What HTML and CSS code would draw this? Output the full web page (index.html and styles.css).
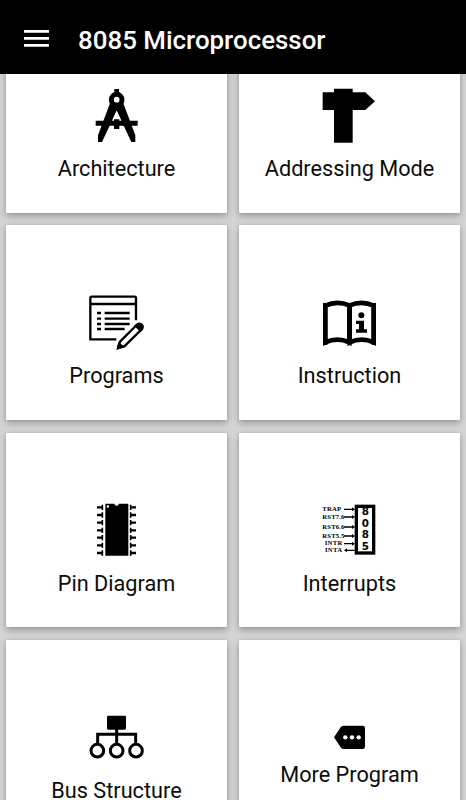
FILE: index.html
```html
<!DOCTYPE html>
<html lang="en">
<head>
    <meta charset="UTF-8">
    <meta name="viewport" content="width=device-width, initial-scale=1.0">
    <title>8085 Microprocessor</title>
    <link rel="stylesheet" href="styles.css">
</head>
<body>

    <header class="toolbar">
        <svg class="menu-icon" viewBox="0 0 25 18">
            <path d="M0 0h25v2.7H0zM0 7h25v2.7H0zM0 14h25v2.7H0z"/>
        </svg>
        <h1>8085 Microprocessor</h1>
    </header>

    <main class="content">
        <div class="grid">
            <a class="card">
                <svg class="icon" viewBox="24 24 168 168">
                    <path d="M103 27h14v14h-14zM47 122h126v15H47zM102 114h16v33h-16z"/>
                    <circle cx="110" cy="59" r="16" fill="none" stroke="#000" stroke-width="15"/>
                    <path d="M90 70L54 166V186H66L110 92L154 186H166V166L130 70L110 80z"/>
                    <path d="M98 118L110 92L122 118z" fill="#fff"/>
                </svg>
                <span class="label">Architecture</span>
            </a>
            <a class="card">
                <svg class="icon" viewBox="36 24 168 168">
                    <path d="M72 26h56v11h38l29 27-29 26h-38v98H72V90H38V37h34z"/>
                </svg>
                <span class="label">Addressing Mode</span>
            </a>
            <a class="card">
                <svg class="icon" viewBox="24 30 168 168">
                    <path d="M109 163H31V39q0-4 4-4H164q4 0 4 4V106M31 57H168" fill="none" stroke="#000" stroke-width="7"/>
                    <path d="M51 84h12M51 101h12M51 117h12M51 132h12M74 84h75M74 101h75M74 117h75M74 132h60" stroke="#000" stroke-width="7"/>
                    <path d="M114 189L120 170L170 120Q177 113 184 120Q190 127 184 134L133 184Z" fill="#fff" stroke="#000" stroke-width="7" stroke-linejoin="round"/>
                    <path d="M109 195L115 171L134 185zM162 122L172 115Q184 110 190 119Q193 127 188 135L181 141z"/>
                </svg>
                <span class="label">Programs</span>
            </a>
            <a class="card">
                <svg class="icon" viewBox="36 29 168 168">
                    <path d="M46 61Q81 45 118 60V171Q82 155 46 171zM119 60Q156 45 191 61V171Q155 155 119 171z" fill="none" stroke="#000" stroke-width="14"/>
                    <path d="M39 53h13v126H39zM185 53h13v126h-13zM112 168h14l-7 12z"/>
                    <circle cx="154" cy="90" r="9"/>
                    <path d="M138 106h24v26h9v10h-33v-10h9v-16h-9z"/>
                </svg>
                <span class="label">Instruction</span>
            </a>
            <a class="card">
                <svg class="icon" viewBox="24 31 168 168">
                    <path d="M76 36h27q1 6 7 6t7-6h28v156H76z"/>
                    <rect x="80" y="41" width="7" height="7" rx="3" fill="#fff"/>
                    <path d="M51 47h15M51 70h15M51 93h15M51 116h15M51 138h15M51 161h15M51 184h15M153 47h15M153 70h15M153 93h15M153 116h15M153 138h15M153 161h15M153 184h15" stroke="#000" stroke-width="7"/>
                    <path d="M67 39v16M67 62v16M67 85v16M67 108v16M67 130v16M67 153v16M67 176v16M152 39v16M152 62v16M152 85v16M152 108v16M152 130v16M152 153v16M152 176v16" stroke="#000" stroke-width="5"/>
                </svg>
                <span class="label">Pin Diagram</span>
            </a>
            <a class="card">
                <svg class="icon" viewBox="36 31 168 168">
                    <rect x="139" y="44" width="52" height="140" fill="none" stroke="#000" stroke-width="10"/>
                    <g class="pin-names">
                        <text x="37" y="57" textLength="56">TRAP</text>
                        <text x="37" y="82" textLength="66">RST7.6</text>
                        <text x="37" y="111" textLength="66">RST6.6</text>
                        <text x="37" y="138" textLength="66">RST5.5</text>
                        <text x="44" y="161" textLength="53">INTR</text>
                        <text x="45" y="182" textLength="51">INTA</text>
                    </g>
                    <path d="M102 53h25M102 76h25M102 106h25M102 133h25M102 156h25M108 176h26" stroke="#000" stroke-width="4"/>
                    <path d="M126 47l9 6-9 6zM126 70l9 6-9 6zM126 100l9 6-9 6zM126 127l9 6-9 6zM126 150l9 6-9 6zM111 170l-9 6 9 6z"/>
                    <g class="chip-digits">
                        <text x="166" y="71">8</text>
                        <text x="166" y="106">0</text>
                        <text x="166" y="140">8</text>
                        <text x="166" y="174">5</text>
                    </g>
                </svg>
                <span class="label">Interrupts</span>
            </a>
            <a class="card">
                <svg class="icon" viewBox="24 28 168 168">
                    <rect x="81" y="48" width="57" height="42" rx="4"/>
                    <path d="M110 88v46M53 134v-30H167v30" fill="none" stroke="#000" stroke-width="9"/>
                    <g fill="none" stroke="#000" stroke-width="9">
                        <circle cx="52" cy="153" r="19"/>
                        <circle cx="110" cy="153" r="19"/>
                        <circle cx="168" cy="153" r="19"/>
                    </g>
                </svg>
                <span class="label">Bus Structure</span>
            </a>
            <a class="card card-more">
                <svg class="icon" viewBox="66 33 108 96">
                    <path d="M100 47h58q7 0 7 7v56q0 7-7 7h-58q-5 0-8-5L72 82l20-30q3-5 8-5z"/>
                    <g fill="#fff">
                        <circle cx="106" cy="82" r="6.5"/>
                        <circle cx="126" cy="82" r="6.5"/>
                        <circle cx="146" cy="82" r="6.5"/>
                    </g>
                </svg>
                <span class="label">More Program</span>
            </a>
        </div>
    </main>

</body>
</html>
```

FILE: styles.css
```css
body {
    margin: 0;
    height: 100vh;
    display: flex;
    flex-direction: column;
    overflow: hidden;
    background-color: #d4d4d4;
    font-family: Roboto, sans-serif;
}
.toolbar {
    flex: none;
    box-sizing: border-box;
    height: 74.4px;
    padding: 4px 24px 0;
    display: flex;
    align-items: center;
    gap: 29px;
    background-color: #000;
    color: #fff;
}
.menu-icon {
    width: 25px;
    height: 18px;
    fill: #fff;
}
h1 {
    margin: 1px 0 0;
    font-size: 25.9px;
    font-weight: 500;
    white-space: nowrap;
}
.content {
    flex: 1;
    min-height: 0;
    overflow: hidden;
}
/* list is scrolled down a little under the toolbar */
.grid {
    display: grid;
    grid-template-columns: 1fr 1fr;
    grid-auto-rows: 194.4px;
    gap: 12.8px;
    margin-top: -56.2px;
    padding: 0 6.4px;
}
.card {
    box-sizing: border-box;
    padding-top: 69.5px;
    display: flex;
    flex-direction: column;
    align-items: center;
    gap: 12.5px;
    background-color: #fff;
    border-radius: 1px;
    box-shadow: 0 3px 7px rgba(0, 0, 0, 0.28), 0 0 3px rgba(0, 0, 0, 0.1);
}
.icon {
    width: 56px;
    height: 56px;
}
.label {
    font-size: 21.7px;
    line-height: 26px;
    color: #0c0c0c;
    white-space: nowrap;
}
.card-more {
    padding-top: 81px;
    gap: 9.5px;
}
.card-more .icon {
    width: 36px;
    height: 32px;
}
.pin-names {
    font-family: "Liberation Serif", serif;
    font-size: 20px;
    font-weight: bold;
}
.chip-digits {
    font-family: "DejaVu Sans", sans-serif;
    font-size: 31px;
    font-weight: bold;
    text-anchor: middle;
}
```
